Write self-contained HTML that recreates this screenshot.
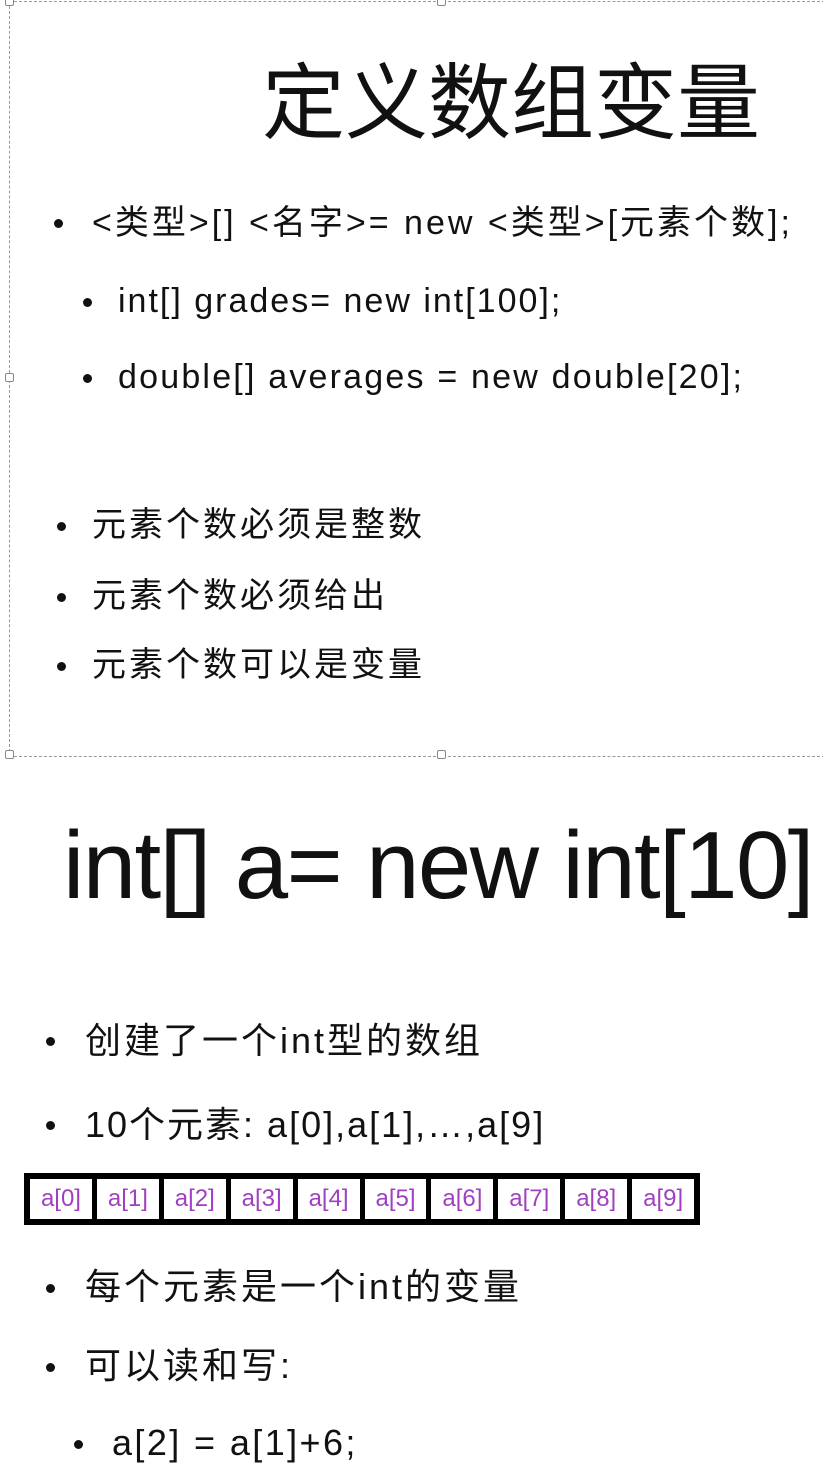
<!DOCTYPE html>
<html><head><meta charset="utf-8"><style>
body{margin:0;width:823px;height:1470px;background:#fff;position:relative;overflow:hidden;font-family:"Liberation Sans","Noto Sans CJK SC",sans-serif;color:#111}
.t{position:absolute;white-space:nowrap;line-height:1}
.b{position:absolute;width:9px;height:9px;border-radius:50%;background:#111}
.h{position:absolute;width:7px;height:7px;border:1px solid #888;background:#fff;border-radius:2px}
.cells{position:absolute;left:24px;top:1173px;width:676px;height:52px;background:#000;display:flex;gap:5px;padding:6px;box-sizing:border-box}
.cells div{flex:1;background:#fff;color:#a040c0;font-size:24px;display:flex;align-items:center;justify-content:center}
</style></head><body>
<div style="position:absolute;left:9px;top:1px;width:820px;height:754px;border-left:1px dashed #999;border-top:1px dashed #999;border-bottom:1px dashed #999"></div>
<div class="h" style="left:5px;top:-3px"></div><div class="h" style="left:437px;top:-3px"></div>
<div class="h" style="left:5px;top:373px"></div><div class="h" style="left:5px;top:750px"></div><div class="h" style="left:437px;top:750px"></div>

<div class="t" style="left:262px;top:62px;font-size:83px">定义数组变量</div>
<div class="b" style="left:54px;top:219px"></div>
<div class="t" style="left:92px;top:206px;font-size:34px;letter-spacing:3px">&lt;类型&gt;[] &lt;名字&gt;= new &lt;类型&gt;[元素个数];</div>
<div class="b" style="left:83px;top:298px"></div>
<div class="t" style="left:118px;top:284px;font-size:34px;letter-spacing:2px">int[] grades= new int[100];</div>
<div class="b" style="left:83px;top:374px"></div>
<div class="t" style="left:118px;top:360px;font-size:34px;letter-spacing:2.2px">double[] averages = new double[20];</div>
<div class="b" style="left:57px;top:522px"></div>
<div class="t" style="left:92px;top:508px;font-size:34px;letter-spacing:3px">元素个数必须是整数</div>
<div class="b" style="left:57px;top:593px"></div>
<div class="t" style="left:92px;top:579px;font-size:34px;letter-spacing:3px">元素个数必须给出</div>
<div class="b" style="left:57px;top:662px"></div>
<div class="t" style="left:92px;top:648px;font-size:34px;letter-spacing:3px">元素个数可以是变量</div>

<div class="t" style="left:63px;top:818px;font-size:96px;letter-spacing:-1.6px">int[] a= new int[10]</div>
<div class="b" style="left:46px;top:1037px"></div>
<div class="t" style="left:85px;top:1023px;font-size:36px;letter-spacing:3px">创建了一个int型的数组</div>
<div class="b" style="left:46px;top:1121px"></div>
<div class="t" style="left:85px;top:1107px;font-size:36px;letter-spacing:2px">10个元素: a[0],a[1],…,a[9]</div>
<div class="cells"><div>a[0]</div><div>a[1]</div><div>a[2]</div><div>a[3]</div><div>a[4]</div><div>a[5]</div><div>a[6]</div><div>a[7]</div><div>a[8]</div><div>a[9]</div></div>
<div class="b" style="left:46px;top:1284px"></div>
<div class="t" style="left:85px;top:1269px;font-size:36px;letter-spacing:3px">每个元素是一个int的变量</div>
<div class="b" style="left:46px;top:1363px"></div>
<div class="t" style="left:85px;top:1348px;font-size:36px;letter-spacing:3px">可以读和写:</div>
<div class="b" style="left:74px;top:1440px"></div>
<div class="t" style="left:112px;top:1425px;font-size:36px;letter-spacing:2.4px">a[2] = a[1]+6;</div>
</body></html>
